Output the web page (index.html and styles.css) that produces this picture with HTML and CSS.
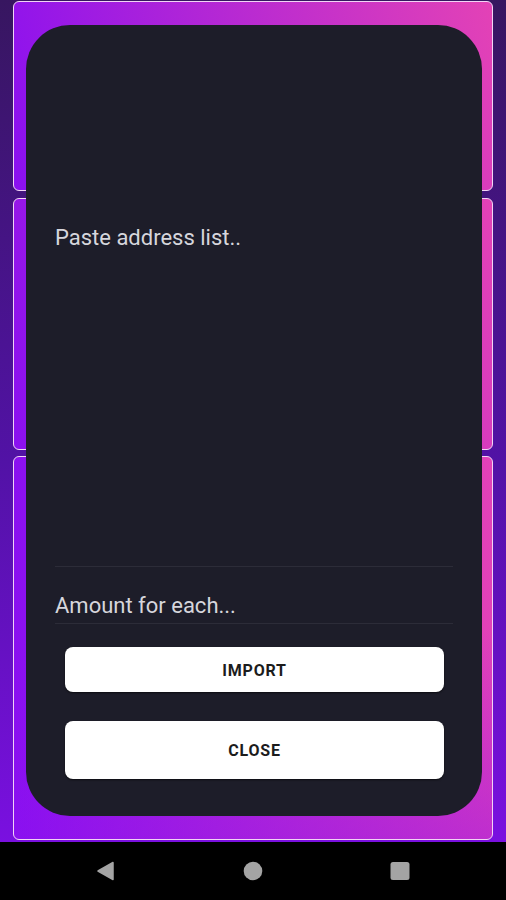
FILE: index.html
```html
<html>
    <head>
        <link rel="stylesheet" href="styles.css">
    </head>
    <body>
        <div class="screen">
            <div class="cards">
                <div class="card card-top"></div>
                <div class="card card-mid"></div>
                <div class="card card-low"></div>
            </div>

            <div class="dialog">
                <div class="field paste">Paste address list..</div>
                <div class="field amount">Amount for each...</div>
                <div class="btn import">IMPORT</div>
                <div class="btn close">CLOSE</div>
            </div>
        </div>

        <div class="navbar">
            <svg width="20" height="20" viewBox="0 0 20 20">
                <path d="M17 1.5 L17 18.5 L2 10 Z" fill="#a4a4a4" stroke="#a4a4a4" stroke-width="1.5" stroke-linejoin="round"/>
            </svg>
            <svg width="20" height="20" viewBox="0 0 20 20">
                <circle cx="10" cy="10" r="9.3" fill="#a4a4a4"/>
            </svg>
            <svg width="20" height="20" viewBox="0 0 20 20">
                <rect x="0.5" y="1" width="19" height="18" rx="2.5" fill="#a4a4a4"/>
            </svg>
        </div>
    </body>
</html>
```

FILE: styles.css
```css
body {
    margin: 0;
    width: 506px;
    height: 900px;
    overflow: hidden;
    font-family: Roboto, 'Noto Sans', sans-serif;
    background-color: #000;
}
.screen {
    position: relative;
    height: 842px;
    background: linear-gradient(to bottom, #371660, #5212a6 55%, #7a10e0);
}
.cards {
    display: flex;
    flex-direction: column;
    gap: 7px;
    padding: 1px 13px 0 13px;
}
.card {
    box-sizing: border-box;
    border: 1.5px solid #f2d4f6;
    border-radius: 6px;
    background: linear-gradient(75deg, #8a10f0, #e342b6);
}
.card-top {
    height: 190px;
}
.card-mid {
    height: 252px;
}
.card-low {
    height: 384px;
    margin-top: -1px;
    background:
        linear-gradient(to bottom, rgba(138, 16, 240, 0) 45%, rgba(138, 16, 240, 0.4)),
        linear-gradient(to right, #8a10f0, #e242b8);
}
.dialog {
    position: absolute;
    left: 26px;
    top: 25px;
    width: 456px;
    height: 791px;
    box-sizing: border-box;
    padding: 0 29px 0 29px;
    border-radius: 44px;
    background-color: #1d1d29;
    display: flex;
    flex-direction: column;
}
.field {
    font-size: 22px;
    line-height: 26px;
    color: #d6d6dc;
    border-bottom: 1px solid #2c2c38;
}
.paste {
    margin-top: 200px;
    height: 341px;
}
.amount {
    margin-top: 26px;
    padding-bottom: 4px;
}
.btn {
    margin-left: 10px;
    width: 379px;
    display: flex;
    align-items: center;
    justify-content: center;
    background-color: #fff;
    border-radius: 8px;
    box-shadow: 0 1px 2px rgba(0, 0, 0, 0.6);
    font-size: 16px;
    font-weight: 700;
    letter-spacing: 0.8px;
    color: #1c1c1c;
}
.import {
    margin-top: 23px;
    height: 45px;
    box-sizing: border-box;
    padding-top: 2px;
}
.close {
    margin-top: 29px;
    height: 58px;
}
.navbar {
    height: 58px;
    display: flex;
    align-items: center;
    justify-content: center;
    gap: 127px;
    background-color: #000;
}
```
